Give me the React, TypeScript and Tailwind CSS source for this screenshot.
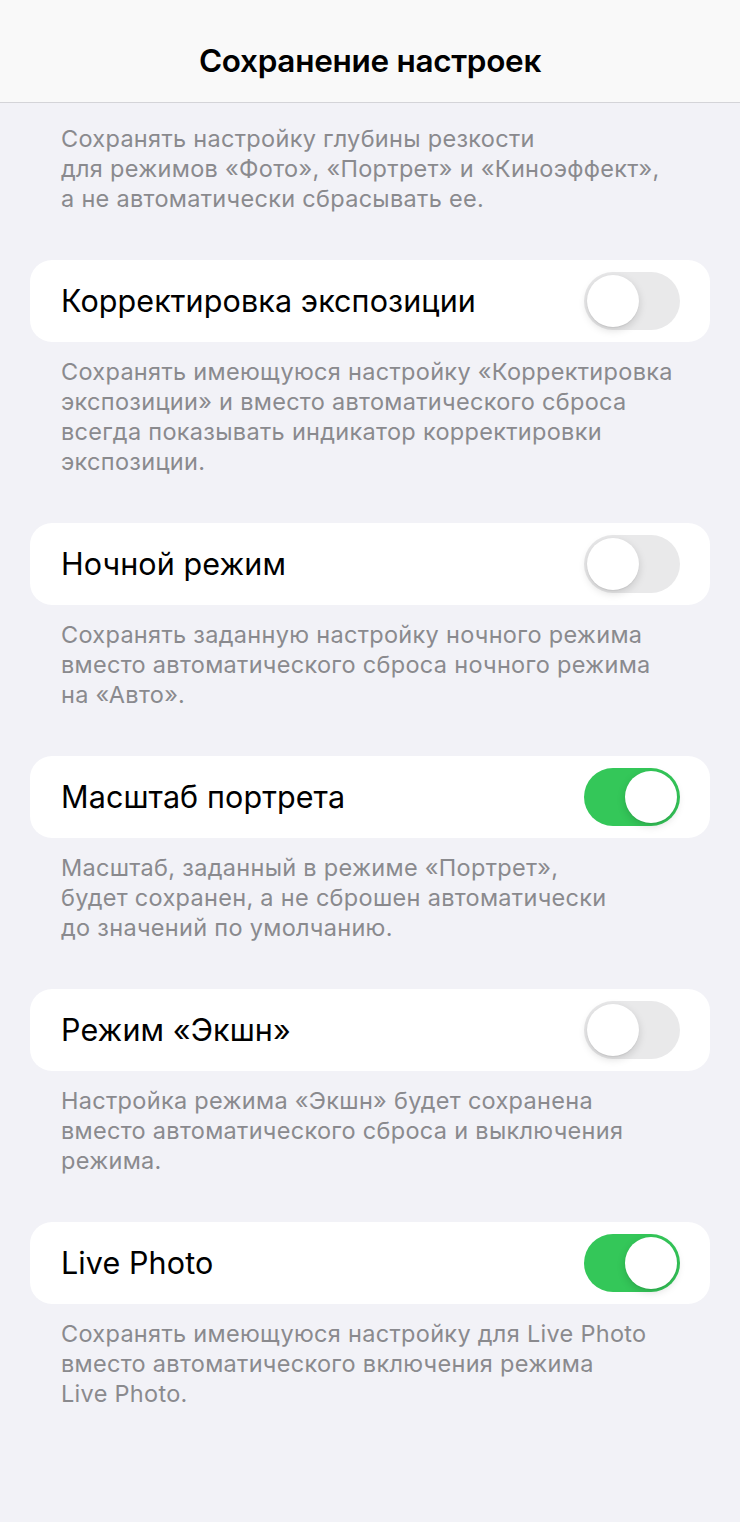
import React from "react";

type Row = { title: string; on: boolean; note: string[] };

const rows: Row[] = [
  {
    title: "Корректировка экспозиции",
    on: false,
    note: [
      "Сохранять имеющуюся настройку «Корректировка",
      "экспозиции» и вместо автоматического сброса",
      "всегда показывать индикатор корректировки",
      "экспозиции.",
    ],
  },
  {
    title: "Ночной режим",
    on: false,
    note: [
      "Сохранять заданную настройку ночного режима",
      "вместо автоматического сброса ночного режима",
      "на «Авто».",
    ],
  },
  {
    title: "Масштаб портрета",
    on: true,
    note: [
      "Масштаб, заданный в режиме «Портрет»,",
      "будет сохранен, а не сброшен автоматически",
      "до значений по умолчанию.",
    ],
  },
  {
    title: "Режим «Экшн»",
    on: false,
    note: [
      "Настройка режима «Экшн» будет сохранена",
      "вместо автоматического сброса и выключения",
      "режима.",
    ],
  },
  {
    title: "Live Photo",
    on: true,
    note: [
      "Сохранять имеющуюся настройку для Live Photo",
      "вместо автоматического включения режима",
      "Live Photo.",
    ],
  },
];

function Toggle({ on }: { on: boolean }) {
  return (
    <div
      className={`flex h-[58px] w-[96px] items-center rounded-full px-[3px] ${
        on ? "justify-end bg-[#34c759]" : "justify-start bg-[#e9e9ea]"
      }`}
    >
      <div className="h-[52px] w-[52px] rounded-full bg-white shadow-[0_3px_8px_rgba(0,0,0,0.15),0_1px_1px_rgba(0,0,0,0.06)]" />
    </div>
  );
}

function Note({ lines }: { lines: string[] }) {
  return (
    <p className="px-[61px] pt-[15px] pb-[46px] text-[23.5px] leading-[30px] tracking-[0.3px] text-[#8a8a8e]">
      {lines.map((l, i) => (
        <span key={i} className="block whitespace-nowrap">
          {l}
        </span>
      ))}
    </p>
  );
}

export default function App() {
  return (
    <div
      className="min-h-[1522px] w-[740px] bg-[#f2f2f7]"
      style={{ fontFamily: "Inter, 'Noto Sans', sans-serif" }}
    >
      {/* Nav bar */}
      <header className="flex h-[103px] items-center justify-center border-b border-[#d4d4d8] bg-[#f9f9f9]">
        <h1 className="mt-[19px] text-[31.5px] font-semibold tracking-[-0.3px] text-black">
          Сохранение настроек
        </h1>
      </header>

      <div className="pt-[6px]">
        <Note
          lines={[
            "Сохранять настройку глубины резкости",
            "для режимов «Фото», «Портрет» и «Киноэффект»,",
            "а не автоматически сбрасывать ее.",
          ]}
        />

        {rows.map((r) => (
          <section key={r.title}>
            <div className="mx-[30px] flex h-[82px] items-center justify-between rounded-[22px] bg-white pl-[31px] pr-[30px]">
              <span className="text-[30.5px] tracking-[0.1px] text-black">{r.title}</span>
              <Toggle on={r.on} />
            </div>
            <Note lines={r.note} />
          </section>
        ))}
      </div>
    </div>
  );
}
